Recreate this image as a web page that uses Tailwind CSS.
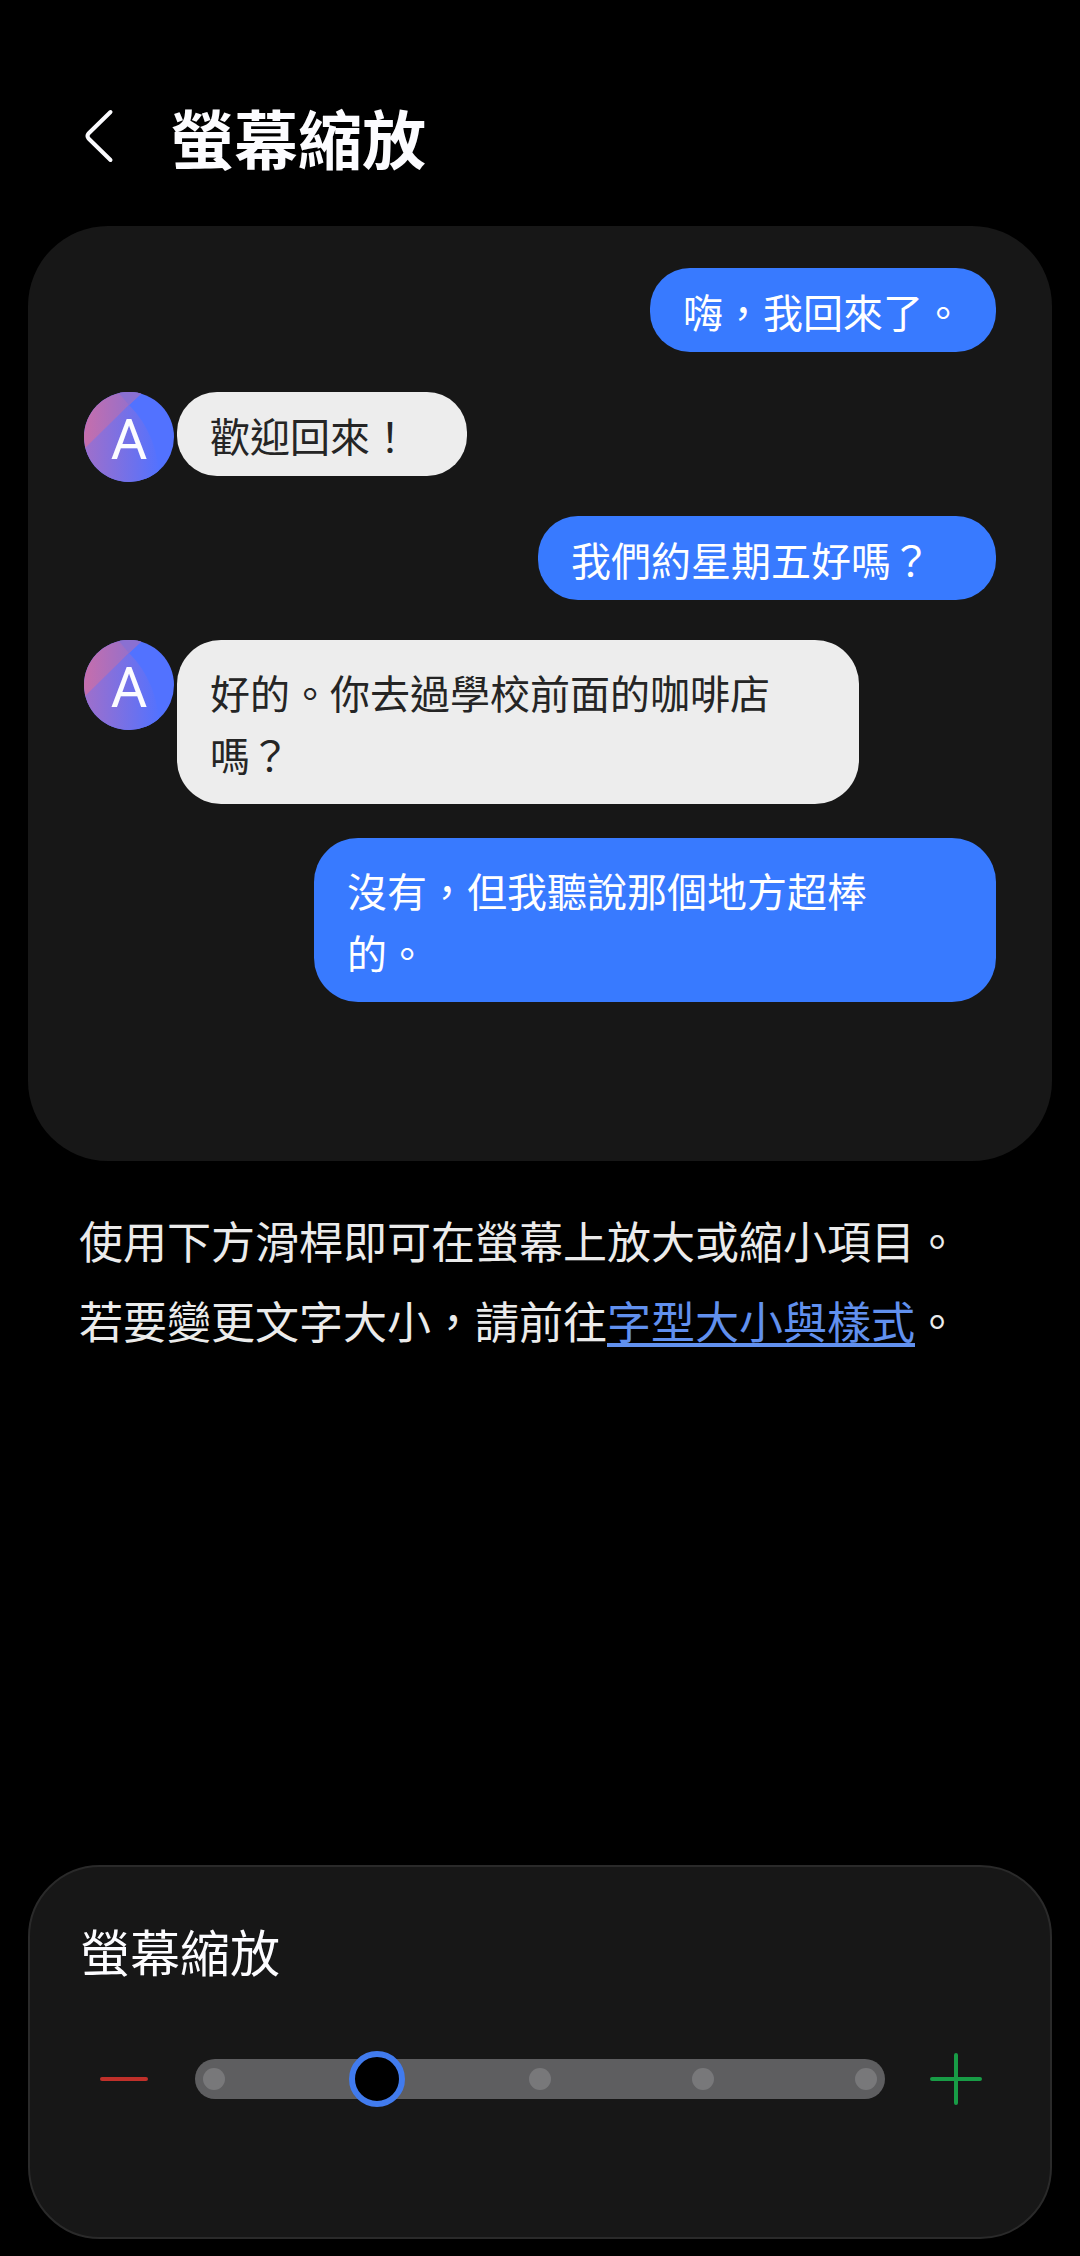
<!DOCTYPE html>
<html lang="zh-TW">
<head>
<meta charset="utf-8">
<meta name="viewport" content="width=device-width, initial-scale=1">
<title>螢幕縮放</title>
<script src="https://cdn.jsdelivr.net/npm/@tailwindcss/browser@4"></script>
</head>
<body class="bg-black text-white">
<div class="flex min-h-screen flex-col px-7 pb-[17px] font-['Noto_Sans_CJK_TC',sans-serif]">

  <header class="flex items-center gap-10 pt-[88px] pb-[42px] pl-[52px]">
    <button type="button" aria-label="返回" class="flex h-24 w-[50px] items-center">
      <svg class="h-[56px] w-[40px]" viewBox="0 0 40 56" fill="none" stroke="#fcfcff" stroke-width="4" stroke-linecap="round" stroke-linejoin="round"><path d="M30.500 4L8.500 25.500Q6.500 28 8.500 30.500L30.500 52"/></svg>
    </button>
    <h1 class="text-[64px] leading-[96px] font-bold text-[#fcfcff]">螢幕縮放</h1>
  </header>

  <main>
    <section aria-label="預覽" class="flex flex-col rounded-[80px] bg-[#171717] px-14 pt-[42px] pb-[119px] text-[40px] leading-[62px]">
      <p class="mb-10 self-end rounded-[40px] bg-[#387aff] px-[33px] pt-3 pb-2.5">嗨，我回來了。</p>

      <div class="mb-[34px] flex items-start gap-[3px]">
        <div class="relative flex size-[90px] shrink-0 items-center justify-center overflow-hidden rounded-full">
          <svg class="absolute inset-0 size-full" viewBox="0 0 90 90" aria-hidden="true">
            <defs>
              <linearGradient id="disc" x1="0" x2="1" y1="0" y2="0"><stop offset="0" stop-color="#a06fca"/><stop offset="1" stop-color="#5272ff"/></linearGradient>
              <linearGradient id="corner" x1="0" x2="1" y1="0" y2="0"><stop offset="0" stop-color="#c66eac"/><stop offset="1" stop-color="#8a70d2"/></linearGradient>
            </defs>
            <rect width="90" height="90" fill="#5272ff"/>
            <path d="M0 90V56L45 13Q74 42 76 90Z" fill="url(#disc)"/>
            <path d="M0 57V0H59L45 13Z" fill="url(#corner)"/>
            <path d="M34 0H59L45 13Z" fill="#8a70d2"/>
          </svg>
          <span class="relative pt-1.5 font-[Roboto,sans-serif] text-[56px] leading-none text-[#fcfcff]">A</span>
        </div>
        <p class="rounded-[40px] bg-[#ededed] pt-3 pr-[57px] pb-2.5 pl-[33px] text-[#252525]">歡迎回來！</p>
      </div>

      <p class="mb-10 self-end rounded-[40px] bg-[#387aff] pt-3 pr-[65px] pb-2.5 pl-[33px]">我們約星期五好嗎？</p>

      <div class="mb-[34px] flex items-start gap-[3px]">
        <div class="relative flex size-[90px] shrink-0 items-center justify-center overflow-hidden rounded-full">
          <svg class="absolute inset-0 size-full" viewBox="0 0 90 90" aria-hidden="true">
            <rect width="90" height="90" fill="#5272ff"/>
            <path d="M0 90V56L45 13Q74 42 76 90Z" fill="url(#disc)"/>
            <path d="M0 57V0H59L45 13Z" fill="url(#corner)"/>
            <path d="M34 0H59L45 13Z" fill="#8a70d2"/>
          </svg>
          <span class="relative pt-1.5 font-[Roboto,sans-serif] text-[56px] leading-none text-[#fcfcff]">A</span>
        </div>
        <p class="w-full max-w-[682px] rounded-[44px] bg-[#ededed] px-[33px] pt-[21px] pb-[19px] text-[#252525]">好的。你去過學校前面的咖啡店嗎？</p>
      </div>

      <p class="mb-10 w-full max-w-[682px] self-end rounded-[44px] bg-[#387aff] px-[33px] pt-[21px] pb-[19px]">沒有，但我聽說那個地方超棒<br>的。</p>
    </section>

    <p class="px-[51px] pt-[39px] text-[44px] leading-[80px] text-[#ebebeb]">使用下方滑桿即可在螢幕上放大或縮小項目。<br>若要變更文字大小，請前往<a href="#font-style" class="text-[#6190ee] underline decoration-4 underline-offset-4">字型大小與樣式</a>。</p>
  </main>

  <section class="mt-auto rounded-[72px] border-2 border-[#2a2a2a] bg-[#171717] px-[50px] pt-[45px] pb-32">
    <label for="zoom" class="block text-[50px] leading-[76px] text-[#fcfcff]">螢幕縮放</label>
    <div class="mt-[61px] flex items-center">
      <button type="button" aria-label="縮小" class="flex h-[60px] w-[106px] items-center pl-[18px]">
        <svg class="size-[56px]" viewBox="0 0 56 56" stroke="#c0302a" stroke-width="4" stroke-linecap="round"><path d="M4 28H48"/></svg>
      </button>
      <div class="grid flex-1 items-center">
        <div class="col-start-1 row-start-1 mx-[9px] flex h-10 items-center justify-between rounded-full bg-[#5e5e60] px-2">
          <span class="size-[22px] rounded-full bg-[#78787a]"></span>
          <span class="size-[22px] rounded-full bg-[#78787a]"></span>
          <span class="size-[22px] rounded-full bg-[#78787a]"></span>
          <span class="size-[22px] rounded-full bg-[#78787a]"></span>
          <span class="size-[22px] rounded-full bg-[#78787a]"></span>
        </div>
        <input id="zoom" type="range" min="0" max="4" step="1" value="1" class="col-start-1 row-start-1 h-[56px] w-full appearance-none bg-transparent [&::-webkit-slider-thumb]:size-[56px] [&::-webkit-slider-thumb]:appearance-none [&::-webkit-slider-thumb]:rounded-full [&::-webkit-slider-thumb]:border-[6px] [&::-webkit-slider-thumb]:border-solid [&::-webkit-slider-thumb]:border-[#417bee] [&::-webkit-slider-thumb]:bg-black">
      </div>
      <button type="button" aria-label="放大" class="flex h-[60px] w-[106px] items-center pl-[34px]">
        <svg class="size-[56px]" viewBox="0 0 56 56" stroke="#189c46" stroke-width="4" stroke-linecap="round"><path d="M4 28H52M28 4V52"/></svg>
      </button>
    </div>
  </section>
</div>
</body>
</html>
